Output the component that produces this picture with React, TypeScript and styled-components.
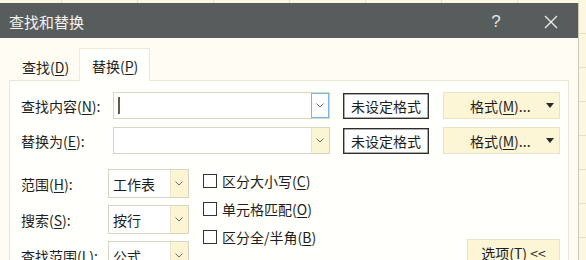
import React from 'react';
import styled, { createGlobalStyle } from 'styled-components';

const Global = createGlobalStyle`
  html, body { margin: 0; padding: 0; }
  body {
    width: 586px;
    height: 260px;
    overflow: hidden;
    background-color: #fcf7e0;
    background-image:
      linear-gradient(to right, #e6dfc2 1px, transparent 1px),
      linear-gradient(to bottom, #e6dfc2 1px, transparent 1px);
    background-size: 76px 34px;
    background-position: 61px 33px;
    font-family: "Noto Sans CJK SC", "Microsoft YaHei", sans-serif;
    color: #1e1e1e;
  }
  #root { height: 260px; }
  u { text-underline-offset: 2px; text-decoration-thickness: 1px; }
`;

const Dialog = styled.div`
  margin-top: 3px;
  width: 578px;
  height: 257px;
  background: #fffdf3;
  border-right: 1px solid #cfcab6;
  display: flex;
  flex-direction: column;
`;

const TitleBar = styled.div`
  height: 35px;
  flex: none;
  background: #575d5c;
  color: #f3f3f1;
  display: flex;
  align-items: center;
  padding-left: 9px;
  padding-right: 20px;
`;

const Title = styled.div`
  flex: 1;
  font-size: 15px;
  line-height: 1;
  padding-top: 2px;
`;

const HelpBtn = styled.div`
  width: 20px;
  text-align: center;
  font-family: "Liberation Sans", Arial, sans-serif;
  font-size: 17px;
  line-height: 1;
  color: #e6e6e4;
  margin-right: 38px;
  padding-top: 2px;
`;

const CloseBtn = styled.div`
  width: 14px;
  height: 14px;
  display: flex;
  align-items: center;
  justify-content: center;
  margin-top: 2px;
`;

const Body = styled.div`
  flex: 1;
  padding: 10px 0 0 9px;
  display: flex;
  flex-direction: column;
`;

const Tabs = styled.div`
  display: flex;
  height: 32px;
  flex: none;
  position: relative;
  z-index: 1;
`;

const Tab = styled.div<{ $active?: boolean }>`
  width: ${(p) => (p.$active ? '71px' : '70px')};
  box-sizing: border-box;
  display: flex;
  align-items: center;
  padding-left: 12px;
  padding-top: ${(p) => (p.$active ? '2px' : '4px')};
  font-size: 14px;
  background: ${(p) => (p.$active ? '#fffffc' : 'transparent')};
  border: 1px solid ${(p) => (p.$active ? '#eee9d8' : 'transparent')};
  border-bottom: none;
  height: ${(p) => (p.$active ? '33px' : '32px')};
`;

const Panel = styled.div`
  width: 560px;
  box-sizing: border-box;
  flex: 1;
  background: #fffffb;
  border: 1px solid #ece7d5;
  border-bottom: none;
  padding: 11px 8px 0 11px;
  display: flex;
  flex-direction: column;
`;

const Row = styled.div<{ $gap?: number }>`
  display: flex;
  align-items: center;
  height: 27px;
  margin-top: ${(p) => p.$gap ?? 0}px;
`;

const Label = styled.div<{ $w: number }>`
  width: ${(p) => p.$w}px;
  flex: none;
  font-size: 14px;
  line-height: 1;
  white-space: nowrap;
`;

const Combo = styled.div<{ $w: number; $h: number }>`
  width: ${(p) => p.$w}px;
  height: ${(p) => p.$h}px;
  box-sizing: border-box;
  flex: none;
  border: 1px solid #d8d4c4;
  background: #ffffff;
  display: flex;
  align-items: stretch;
`;

const ComboText = styled.div`
  flex: 1;
  display: flex;
  align-items: center;
  padding-left: 4px;
  font-size: 14px;
`;

const Caret = styled.div`
  width: 2px;
  height: 17px;
  background: #645c3e;
`;

const ArrowBox = styled.div<{ $focus?: boolean }>`
  width: 18px;
  box-sizing: border-box;
  display: flex;
  align-items: center;
  justify-content: center;
  background: ${(p) => (p.$focus ? '#ffffff' : '#fcf5d4')};
  border: 1px solid ${(p) => (p.$focus ? '#7cb6e4' : 'transparent')};
  border-left: 1px solid ${(p) => (p.$focus ? '#7cb6e4' : '#e8e2cb')};
  margin: ${(p) => (p.$focus ? '0' : '0')};
`;

const PlainBtn = styled.div`
  width: 86px;
  height: 26px;
  box-sizing: border-box;
  margin-left: 13px;
  border: 1px solid #2e2e2e;
  box-shadow: inset 0 0 0 0.5px #5a5a5a;
  background: #ffffff;
  display: flex;
  align-items: center;
  justify-content: center;
  font-size: 14px;
`;

const CreamBtn = styled.div<{ $w: number }>`
  width: ${(p) => p.$w}px;
  height: 27px;
  box-sizing: border-box;
  border: 1px solid #e9e3c9;
  background: #fcf5d6;
  display: flex;
  align-items: center;
  font-size: 14px;
  white-space: nowrap;
`;

const MenuBtn = styled(CreamBtn)`
  margin-left: 14px;
  padding-left: 26px;
  padding-right: 5px;
`;

const MenuText = styled.span`
  flex: 1;
`;

const Options = styled.div`
  display: flex;
  margin-top: 15px;
`;

const OptCol = styled.div`
  display: flex;
  flex-direction: column;
  gap: 7px;
`;

const OptRow = styled.div`
  display: flex;
  align-items: center;
  height: 29px;
`;

const CheckCol = styled.div`
  display: flex;
  flex-direction: column;
  margin-left: 14px;
  margin-top: -2px;
`;

const CheckRow = styled.div`
  display: flex;
  align-items: center;
  height: 28px;
  font-size: 14px;
  gap: 5px;
`;

const Box = styled.div`
  width: 14px;
  height: 14px;
  box-sizing: border-box;
  border: 1px solid #333333;
  background: #ffffff;
`;

const OptionsBtn = styled(CreamBtn)`
  margin-left: auto;
  margin-top: 70px;
  justify-content: center;
  padding-top: 1px;
`;

const Chevron = () => (
  <svg width="8" height="5" viewBox="0 0 8 5">
    <polyline points="0.5,0.5 4,4 7.5,0.5" fill="none" stroke="#6a6a6a" strokeWidth="1" />
  </svg>
);

const Tri = () => (
  <svg width="8" height="5" viewBox="0 0 8 5">
    <polygon points="0,0 8,0 4,5" fill="#2a2a2a" />
  </svg>
);

const OptCombo = ({ text }: { text: string }) => (
  <Combo $w={81} $h={29}>
    <ComboText>{text}</ComboText>
    <ArrowBox>
      <Chevron />
    </ArrowBox>
  </Combo>
);

export default function App() {
  return (
    <>
      <Global />
      <Dialog>
        <TitleBar>
          <Title>查找和替换</Title>
          <HelpBtn>?</HelpBtn>
          <CloseBtn>
            <svg width="14" height="14" viewBox="0 0 14 14">
              <path d="M1 1 L13 13 M13 1 L1 13" stroke="#eeeeec" strokeWidth="1.3" />
            </svg>
          </CloseBtn>
        </TitleBar>
        <Body>
          <Tabs>
            <Tab>查找(<u>D</u>)</Tab>
            <Tab $active>替换(<u>P</u>)</Tab>
          </Tabs>
          <Panel>
            <Row>
              <Label $w={92}>查找内容(<u>N</u>):</Label>
              <Combo $w={217} $h={27}>
                <ComboText>
                  <Caret />
                </ComboText>
                <ArrowBox $focus>
                  <Chevron />
                </ArrowBox>
              </Combo>
              <PlainBtn>未设定格式</PlainBtn>
              <MenuBtn $w={117}>
                <MenuText>格式(<u>M</u>)...</MenuText>
                <Tri />
              </MenuBtn>
            </Row>
            <Row $gap={8}>
              <Label $w={92}>替换为(<u>E</u>):</Label>
              <Combo $w={217} $h={27}>
                <ComboText />
                <ArrowBox>
                  <Chevron />
                </ArrowBox>
              </Combo>
              <PlainBtn>未设定格式</PlainBtn>
              <MenuBtn $w={117}>
                <MenuText>格式(<u>M</u>)...</MenuText>
                <Tri />
              </MenuBtn>
            </Row>
            <Options>
              <OptCol>
                <OptRow>
                  <Label $w={87}>范围(<u>H</u>):</Label>
                  <OptCombo text="工作表" />
                </OptRow>
                <OptRow>
                  <Label $w={87}>搜索(<u>S</u>):</Label>
                  <OptCombo text="按行" />
                </OptRow>
                <OptRow>
                  <Label $w={87}>查找范围(<u>L</u>):</Label>
                  <OptCombo text="公式" />
                </OptRow>
              </OptCol>
              <CheckCol>
                <CheckRow>
                  <Box />
                  <span>区分大小写(<u>C</u>)</span>
                </CheckRow>
                <CheckRow>
                  <Box />
                  <span>单元格匹配(<u>O</u>)</span>
                </CheckRow>
                <CheckRow>
                  <Box />
                  <span>区分全/半角(<u>B</u>)</span>
                </CheckRow>
              </CheckCol>
              <OptionsBtn $w={93}>选项(<u>T</u>) &lt;&lt;</OptionsBtn>
            </Options>
          </Panel>
        </Body>
      </Dialog>
    </>
  );
}
